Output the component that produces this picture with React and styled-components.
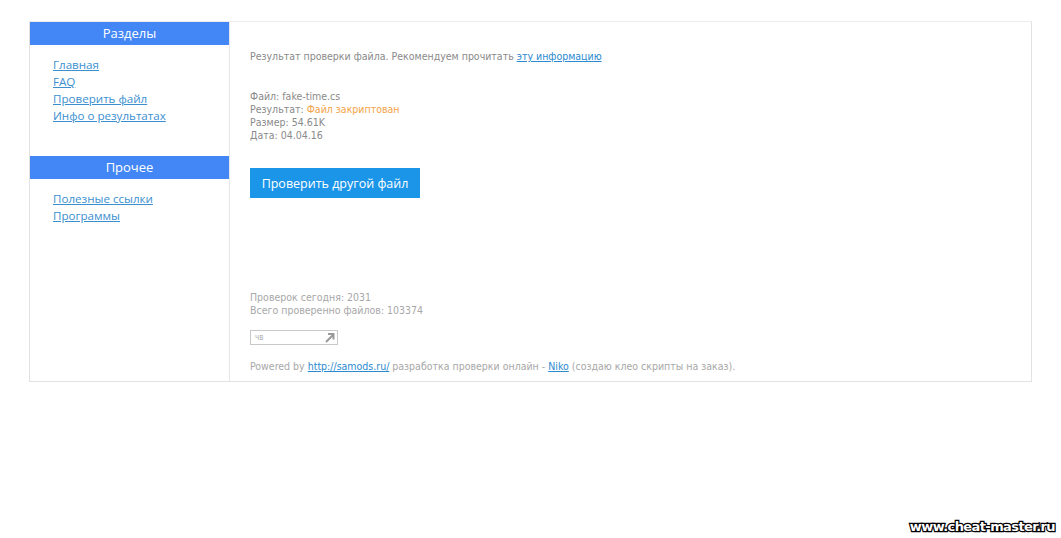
import styled, { createGlobalStyle } from "styled-components";

const GlobalStyle = createGlobalStyle`
  html, body {
    margin: 0;
    padding: 0;
    background: #fff;
    height: 100%;
  }
  body {
    font-family: "DejaVu Sans Condensed", "DejaVu Sans", sans-serif;
  }
`;

const sections = [
  { title: "Разделы", links: ["Главная", "FAQ", "Проверить файл", "Инфо о результатах"] },
  { title: "Прочее", links: ["Полезные ссылки", "Программы"] },
];

const App = () => {
  return (
    <Page>
      <GlobalStyle />
      <Frame>
        <Sidebar>
          {sections.map((s) => (
            <Section key={s.title}>
              <SectionTitle>{s.title}</SectionTitle>
              <LinkList>
                {s.links.map((l) => (
                  <SideLink key={l} href="#">
                    {l}
                  </SideLink>
                ))}
              </LinkList>
            </Section>
          ))}
        </Sidebar>
        <Content>
          <Intro>
            Результат проверки файла. Рекомендуем прочитать <TextLink href="#">эту информацию</TextLink>
          </Intro>
          <Details>
            <div>Файл: fake-time.cs</div>
            <div>
              Результат: <Warn>Файл закриптован</Warn>
            </div>
            <div>Размер: 54.61K</div>
            <div>Дата: 04.04.16</div>
          </Details>
          <Button>Проверить другой файл</Button>
          <Stats>
            <div>Проверок сегодня: 2031</div>
            <div>Всего проверенно файлов: 103374</div>
          </Stats>
          <Counter>
            <CounterText>чв</CounterText>
            <svg width="11" height="11" viewBox="0 0 11 11">
              <path d="M2 10 L9 3 M4 2 H9.5 V7.5" stroke="#9a9a9a" strokeWidth="2" fill="none" />
            </svg>
          </Counter>
          <Footer>
            Powered by <TextLink href="#">http://samods.ru/</TextLink> разработка проверки онлайн -{" "}
            <TextLink href="#">Niko</TextLink> (создаю клео скрипты на заказ).
          </Footer>
        </Content>
      </Frame>
      <Watermark>www.cheat-master.ru</Watermark>
    </Page>
  );
};

//Styled Components
const Page = styled.div`
  position: relative;
  width: 1061px;
  height: 538px;
  padding: 21px 0 0 29px;
  box-sizing: border-box;
  overflow: hidden;
`;

const Frame = styled.div`
  display: flex;
  width: 1003px;
  height: 361px;
  box-sizing: border-box;
  border: 1px solid #e2e2e2;
  border-top-color: #ececec;
`;

const Sidebar = styled.div`
  width: 200px;
  box-sizing: border-box;
  flex-shrink: 0;
  border-right: 1px solid #e6e6e6;
  display: flex;
  flex-direction: column;
  gap: 23px;
`;

const Section = styled.div`
  display: flex;
  flex-direction: column;
`;

const SectionTitle = styled.div`
  height: 23px;
  line-height: 22px;
  background: #4287f5;
  color: #fff;
  text-align: center;
  font-family: "Open Sans", "Noto Sans", sans-serif;
  font-size: 13px;
`;

const LinkList = styled.div`
  display: flex;
  flex-direction: column;
  padding: 11px 0 0 23px;
  height: 88px;
  box-sizing: border-box;
`;

const SideLink = styled.a`
  font-family: "Open Sans", "Noto Sans", sans-serif;
  font-size: 11.6px;
  line-height: 17px;
  color: #3b8fcf;
  text-decoration: underline;
`;

const Content = styled.div`
  flex: 1;
  padding: 28px 20px 0 20px;
  display: flex;
  flex-direction: column;
  align-items: flex-start;
  font-size: 10.5px;
  line-height: 13px;
  color: #8a8a8a;
`;

const Intro = styled.div``;

const TextLink = styled.a`
  color: #2b8ad0;
  text-decoration: underline;
`;

const Details = styled.div`
  margin-top: 27px;
`;

const Warn = styled.span`
  color: #f3a348;
`;

const Button = styled.button`
  margin-top: 26px;
  height: 30px;
  width: 170px;
  border: none;
  background: #1b95e8;
  color: #fff;
  font-family: "Open Sans", "Noto Sans", sans-serif;
  font-size: 12.5px;
  padding: 0;
  cursor: pointer;
`;

const Stats = styled.div`
  margin-top: 93px;
  color: #a8a8a8;
`;

const Counter = styled.div`
  margin-top: 13px;
  width: 88px;
  height: 15px;
  box-sizing: border-box;
  border: 1px solid #c8c8c8;
  display: flex;
  align-items: center;
  justify-content: space-between;
  padding: 0 2px 0 4px;
`;

const CounterText = styled.span`
  font-size: 8px;
  line-height: 8px;
  color: #b0b0b0;
`;

const Footer = styled.div`
  margin-top: 15px;
  color: #a8a8a8;
`;

const Watermark = styled.div`
  position: absolute;
  right: 6px;
  bottom: 4px;
  font-family: "DejaVu Sans", sans-serif;
  font-weight: bold;
  font-size: 13px;
  letter-spacing: -0.6px;
  color: #fff;
  -webkit-text-stroke: 2.5px #000;
  paint-order: stroke fill;
`;

export default App;
